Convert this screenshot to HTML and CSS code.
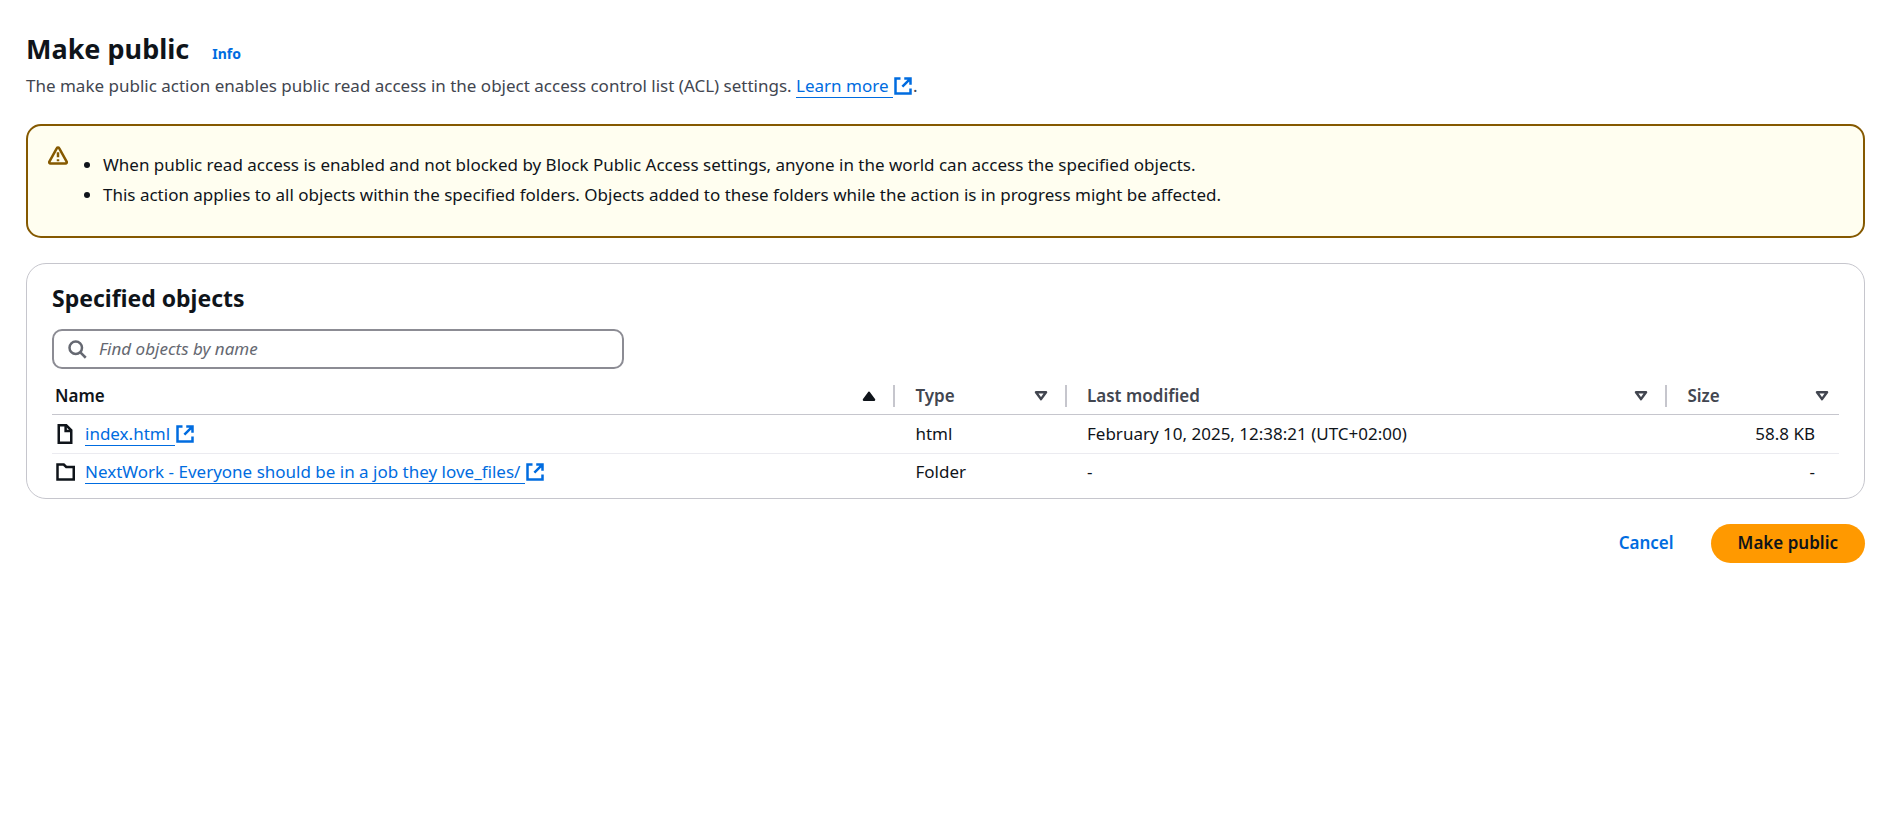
FILE: index.html
```html
<!DOCTYPE html>
<html lang="en">
<head>
<meta charset="utf-8">
<title>Make public</title>
<link rel="stylesheet" href="styles.css">
</head>
<body>
<svg class="sprite" aria-hidden="true">
  <symbol id="external" viewBox="0 0 16 16"><path d="M9 2h5v5M7.500 8.500l6-6" /><path d="M14 10v4H2V2h4" /></symbol>
  <symbol id="sort" viewBox="0 0 16 16"><path d="M4 5h8l-4 5.500z" /></symbol>
</svg>
<main class="page">
  <header class="page-header">
    <div class="title-row">
      <h1 class="title">Make public</h1>
      <a class="info" href="#info">Info</a>
    </div>
    <p class="description">The make public action enables public read access in the object access control list (ACL) settings. <a class="link" href="#learn"><span class="link-text">Learn more&nbsp;</span><svg class="icon external"><use href="#external"/></svg></a>.</p>
  </header>

  <section class="alert">
    <svg class="icon alert-icon" viewBox="0 0 16 16"><path d="M8.900 1.700 14.900 12.500c.4.8 0 1.500-.9 1.500H2c-.9 0-1.300-.7-.9-1.500L7.100 1.700c.4-.8 1.400-.8 1.800 0z" /><path d="M8 5v4M8 10.500v1.600" /></svg>
    <ul class="alert-list">
      <li>When public read access is enabled and not blocked by Block Public Access settings, anyone in the world can access the specified objects.</li>
      <li>This action applies to all objects within the specified folders. Objects added to these folders while the action is in progress might be affected.</li>
    </ul>
  </section>

  <section class="panel">
    <h2 class="panel-title">Specified objects</h2>
    <label class="search">
      <svg class="icon search-icon" viewBox="0 0 16 16"><circle cx="7" cy="7" r="5" /><path d="m15 15-4.500-4.500" /></svg>
      <input class="search-input" type="search" placeholder="Find objects by name" aria-label="Find objects by name">
    </label>
    <table class="objects">
      <colgroup><col class="col-name"><col class="col-type"><col class="col-modified"><col class="col-size"></colgroup>
      <thead>
        <tr>
          <th aria-sort="ascending"><button class="sort sort-active" type="button">Name<svg class="sort-icon" viewBox="0 0 16 16"><path d="M4 11h8L8 5.500z" /></svg></button></th>
          <th><button class="sort" type="button">Type<svg class="sort-icon"><use href="#sort"/></svg></button></th>
          <th><button class="sort" type="button">Last modified<svg class="sort-icon"><use href="#sort"/></svg></button></th>
          <th><button class="sort" type="button">Size<svg class="sort-icon"><use href="#sort"/></svg></button></th>
        </tr>
      </thead>
      <tbody>
        <tr>
          <td><div class="object"><svg class="icon" viewBox="0 0 16 16"><path d="M3 1h6l4 4v10H3z" /><path d="M8.500 1v4.500H13" /></svg><a class="link" href="#file"><span class="link-text">index.html&nbsp;</span><svg class="icon external"><use href="#external"/></svg></a></div></td>
          <td>html</td>
          <td>February 10, 2025, 12:38:21 (UTC+02:00)</td>
          <td class="number">58.8 KB</td>
        </tr>
        <tr>
          <td><div class="object"><svg class="icon" viewBox="0 0 16 16"><path d="M2 2h5l2 2h6v10H2z" /></svg><a class="link" href="#folder"><span class="link-text">NextWork - Everyone should be in a job they love_files/&nbsp;</span><svg class="icon external"><use href="#external"/></svg></a></div></td>
          <td>Folder</td>
          <td>-</td>
          <td class="number">-</td>
        </tr>
      </tbody>
    </table>
  </section>

  <footer class="actions">
    <button class="button" type="button">Cancel</button>
    <button class="button button-primary" type="button">Make public</button>
  </footer>
</main>
</body>
</html>
```
FILE: styles.css
```css
* {
  box-sizing: border-box;
}

body {
  margin: 0;
  background: #fff;
  color: #0f141a;
  font: 17px/26px "Noto Sans", "Open Sans", sans-serif;
}

h1, h2, p, ul {
  margin: 0;
}

button, input {
  font: inherit;
}

.sprite {
  position: absolute;
  width: 0;
  height: 0;
}

.page {
  padding: 30px 27px 30px 26px;
}

.title-row {
  display: flex;
  align-items: baseline;
  gap: 23px;
  margin-bottom: 5px;
}

.title {
  font-size: 27px;
  font-weight: 700;
  line-height: 38px;
}

.info {
  color: #006ce0;
  font-size: 14px;
  font-weight: 700;
  text-decoration: none;
}

.description {
  color: #424650;
}

.link {
  color: #006ce0;
  text-decoration: none;
}

.link-text {
  border-bottom: 1px solid #006ce0;
}

.icon {
  flex: none;
  width: 20px;
  height: 20px;
  fill: none;
  stroke: currentColor;
  stroke-width: 2;
}

.external {
  vertical-align: -4px;
}

.alert {
  display: flex;
  gap: 16px;
  margin-top: 25px;
  padding: 20px;
  border: 2px solid #855900;
  border-radius: 15px;
  background: #fffef0;
}

.alert-icon {
  color: #855900;
  stroke-linejoin: round;
}

.alert-list {
  padding: 4px 0 6px 19px;
  line-height: 30px;
}

.panel {
  margin-top: 25px;
  padding: 18px 25px 6px;
  border: 1px solid #c6c6cd;
  border-radius: 20px;
}

.panel-title {
  font-size: 23px;
  font-weight: 700;
  line-height: 32px;
}

.search {
  display: flex;
  align-items: center;
  gap: 12px;
  width: 32%;
  height: 40px;
  margin-top: 15px;
  padding: 0 13px;
  border: 2px solid #8c8c94;
  border-radius: 10px;
}

.search-icon {
  color: #656871;
}

.search-input {
  flex: 1;
  min-width: 0;
  padding: 0;
  border: 0;
  outline: 0;
  background: transparent;
}

.search-input::placeholder {
  color: #656871;
  font-style: italic;
  opacity: 1;
}

.objects {
  width: 100%;
  margin-top: 8px;
  border-collapse: separate;
  border-spacing: 0;
  table-layout: fixed;
}

.col-name {
  width: 47.2%;
}

.col-type,
.col-size {
  width: 9.6%;
}

.objects th {
  padding: 8px 0 7px;
  border-bottom: 1px solid #c6c6cd;
}

.sort {
  display: flex;
  align-items: center;
  justify-content: space-between;
  width: 100%;
  height: 22px;
  padding: 0 14px 0 20px;
  border: 0;
  border-right: 2px solid #c6c6cd;
  background: transparent;
  color: #424650;
  font-weight: 600;
}

.objects th:last-child .sort {
  padding-right: 7px;
  border-right: 0;
}

.objects th:first-child .sort {
  padding-left: 3px;
}

.sort-active {
  color: #0f141a;
}

.sort-icon {
  width: 20px;
  height: 20px;
  fill: none;
  stroke: currentColor;
  stroke-width: 2;
  stroke-linejoin: round;
}

.sort-active .sort-icon {
  fill: currentColor;
}

.objects td {
  height: 38px;
  padding: 5px 20px 7px;
}

.objects td:first-child {
  padding-left: 3px;
}

.objects tr:first-child td {
  height: 39px;
  padding-top: 6px;
  padding-bottom: 6px;
  border-bottom: 1px solid #ebebf0;
}

.objects .number {
  padding-right: 24px;
  text-align: right;
}

.object {
  display: flex;
  align-items: center;
  gap: 10px;
}

.actions {
  display: flex;
  justify-content: flex-end;
  gap: 10px;
  margin-top: 25px;
}

.button {
  height: 39px;
  padding: 0 27px 1px;
  border: 0;
  border-radius: 20px;
  background: transparent;
  color: #006ce0;
  font-weight: 600;
}

.button-primary {
  background: #ff9900;
  color: #0f141a;
}
```
